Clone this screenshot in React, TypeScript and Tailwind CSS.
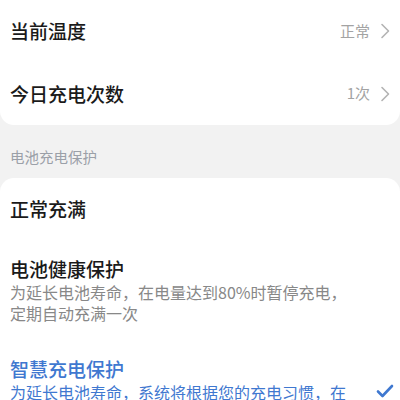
import React from "react";

const Chevron = () => (
  <svg width="10" height="16" viewBox="0 0 10 16" fill="none">
    <path d="M2 1.5 L8.5 8 L2 14.5" stroke="#b3b3b3" strokeWidth="1.6" strokeLinecap="round" strokeLinejoin="round" />
  </svg>
);

const Check = () => (
  <svg width="18" height="14" viewBox="0 0 18 14" fill="none">
    <path d="M2 7.5 L6.5 12 L16 2" stroke="#3f78d0" strokeWidth="2.6" strokeLinecap="round" strokeLinejoin="round" />
  </svg>
);

export default function App() {
  return (
    <div
      className="w-[400px] h-[400px] overflow-hidden bg-[#f2f2f2]"
      style={{ fontFamily: '"Noto Sans CJK SC", "Noto Sans", sans-serif' }}
    >
      <div className="bg-white rounded-b-[14px]">
        <div className="h-[62px] flex items-center justify-between pl-[10px] pr-[10px]">
          <span className="text-[19px] font-medium text-[#1a1a1a] leading-[26px]">当前温度</span>
          <div className="flex items-center gap-[10px]">
            <span className="text-[15px] text-[#a3a3a3]">正常</span>
            <Chevron />
          </div>
        </div>
        <div className="h-[63px] flex items-center justify-between pl-[10px] pr-[10px]">
          <span className="text-[19px] font-medium text-[#1a1a1a] leading-[26px]">今日充电次数</span>
          <div className="flex items-center gap-[10px]">
            <span className="text-[15px] text-[#a3a3a3]">1次</span>
            <Chevron />
          </div>
        </div>
      </div>
      <div className="h-[53px] pt-[22px] pl-[10px]">
        <div className="text-[14.5px] leading-[20px] text-[#9ba0a8]">电池充电保护</div>
      </div>
      <div className="bg-white rounded-t-[14px]">
        <div className="h-[62px] flex items-center pl-[10px]">
          <span className="text-[19px] font-medium text-[#1a1a1a] leading-[26px]">正常充满</span>
        </div>
        <div className="pt-[16px] pb-[33px] pl-[10px] flex items-center">
          <div className="w-[342px]">
            <div className="text-[19px] font-medium text-[#1a1a1a] leading-[26px]">电池健康保护</div>
            <div className="text-[16px] leading-[21px] text-[#888888]">
              为延长电池寿命，在电量达到80%时暂停充电，定期自动充满一次
            </div>
          </div>
        </div>
        <div className="pl-[10px] flex items-center">
          <div className="w-[342px]">
            <div className="text-[19px] font-medium text-[#3f78d0] leading-[26px] -mt-[1px]">智慧充电保护</div>
            <div className="text-[16px] leading-[21px] text-[#3f78d0]">
              为延长电池寿命，系统将根据您的充电习惯，在充电过程中智能调整充电策略
            </div>
          </div>
          <div className="flex-1 flex justify-end pr-[6px]">
            <Check />
          </div>
        </div>
      </div>
    </div>
  );
}
